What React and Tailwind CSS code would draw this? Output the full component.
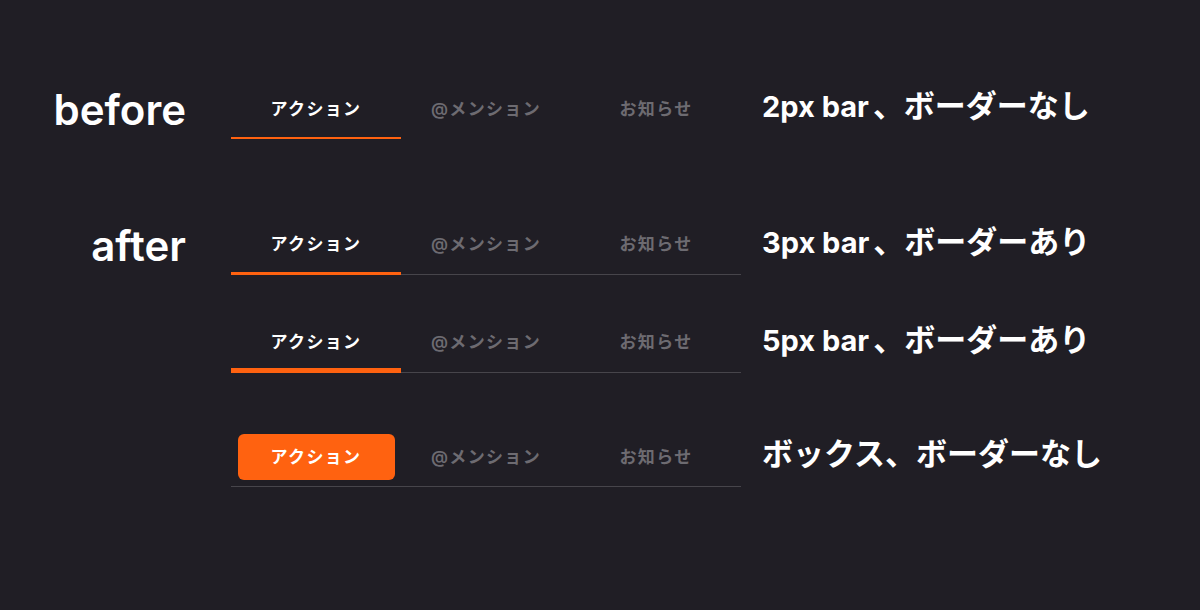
import React from "react";

const font = { fontFamily: "Inter, 'Noto Sans CJK JP', sans-serif" };

function Tabs({ variant }) {
  const tabs = ["アクション", "@メンション", "お知らせ"];
  if (variant === "box") {
    return (
      <div className="flex w-[510px] border-b border-[#47454b] pt-[9px] pb-[6px]">
        {tabs.map((t, i) => (
          <div key={t} className="w-[170px] flex justify-center">
            <div
              className={
                i === 0
                  ? "w-[157px] h-[46px] pt-[2px] rounded-[6px] bg-[#ff6210] text-white flex items-center justify-center text-[17px] font-semibold tracking-[0.08em]"
                  : "w-[157px] h-[46px] pt-[2px] flex items-center justify-center text-[17px] font-semibold tracking-[0.08em] text-[#6d6b71]"
              }
            >
              {t}
            </div>
          </div>
        ))}
      </div>
    );
  }
  const barH =
    variant === "2" ? "h-[2px]" : variant === "3" ? "h-[3px]" : "h-[5px]";
  const bordered = variant !== "2";
  return (
    <div
      className={
        bordered
          ? "flex w-[510px] h-[62px] border-b border-[#47454b]"
          : "flex w-[510px] h-[62px]"
      }
    >
      {tabs.map((t, i) => (
        <div
          key={t}
          className="relative w-[170px] flex items-center justify-center pt-[3px]"
        >
          <span
            className={
              i === 0
                ? "text-[17px] font-semibold tracking-[0.08em] text-white"
                : "text-[17px] font-semibold tracking-[0.08em] text-[#6d6b71]"
            }
          >
            {t}
          </span>
          {i === 0 && (
            <div
              className={
                bordered
                  ? `absolute left-0 right-0 -bottom-px bg-[#ff6210] ${barH}`
                  : `absolute left-0 right-0 bottom-0 bg-[#ff6210] ${barH}`
              }
            />
          )}
        </div>
      ))}
    </div>
  );
}

function Row({ label, variant, latin, jp, className }) {
  return (
    <div className={`flex items-center ${className}`}>
      <div className="w-[186px] text-right text-[42px] font-semibold text-white leading-[48px] pt-[3px]">
        {label}
      </div>
      <div className="ml-[45px]">
        <Tabs variant={variant} />
      </div>
      <div className="ml-[21px] font-bold text-white leading-[40px] whitespace-nowrap">
        {latin && <span className="text-[29px] mr-[4px]">{latin}</span>}
        <span className="text-[31px]">{jp}</span>
      </div>
    </div>
  );
}

export default function App() {
  return (
    <div
      className="w-[1200px] h-[610px] bg-[#201e25] pt-[77px] overflow-hidden"
      style={font}
    >
      <Row label="before" variant="2" latin="2px bar" jp="、ボーダーなし" />
      <Row
        label="after"
        variant="3"
        latin="3px bar"
        jp="、ボーダーあり"
        className="mt-[74px]"
      />
      <Row
        label=""
        variant="5"
        latin="5px bar"
        jp="、ボーダーあり"
        className="mt-[36px]"
      />
      <Row
        label=""
        variant="box"
        latin=""
        jp="ボックス、ボーダーなし"
        className="mt-[52px]"
      />
    </div>
  );
}
